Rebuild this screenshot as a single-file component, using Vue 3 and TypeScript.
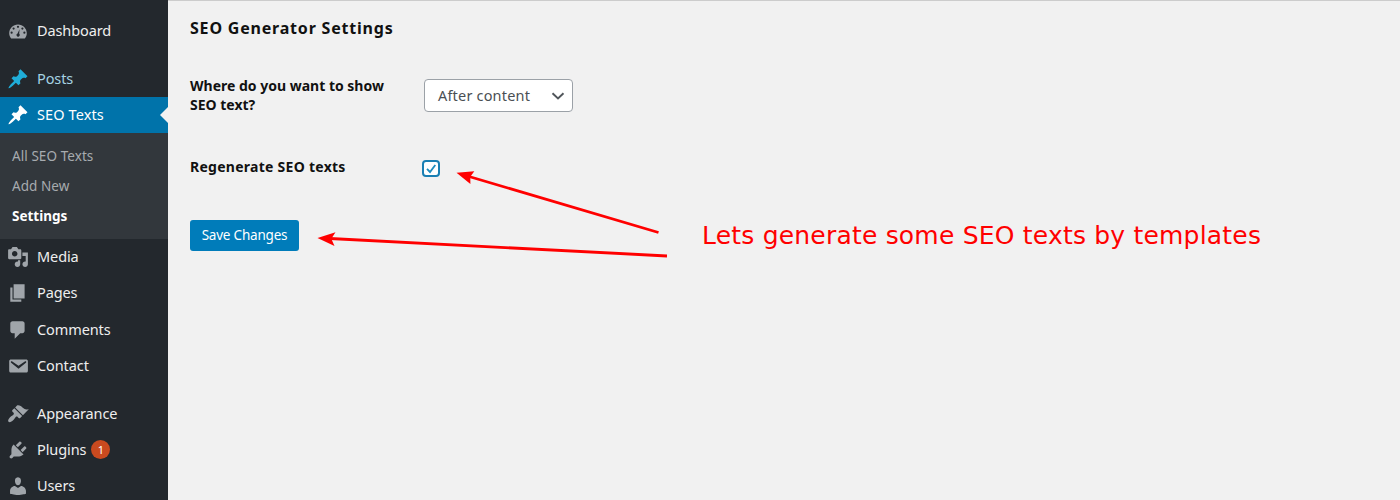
<script setup lang="ts">
interface MenuItem {
  label: string
  icon: string
  state?: 'hover' | 'current'
  gap?: boolean
  badge?: number
  children?: { label: string; active?: boolean }[]
}

const pin =
  'M10.44 3.02l1.82-1.82 6.36 6.35-1.83 1.82c-1.05-.68-2.48-.57-3.41.36l-.75.75c-.92.93-1.04 2.35-.35 3.41l-1.83 1.82-2.41-2.41-2.8 2.79c-.42.42-3.38 2.71-3.8 2.29s1.86-3.39 2.28-3.81l2.79-2.79L4.1 9.36l1.83-1.82c1.05.69 2.48.57 3.4-.36l.75-.75c.93-.92 1.05-2.35.36-3.41z'

const menu: MenuItem[] = [
  {
    label: 'Dashboard',
    icon: 'M3.76 16.8h12.48C17.34 15.43 18 13.89 18 12c0-4.42-3.58-8-8-8s-8 3.58-8 8c0 1.89.66 3.43 1.76 4.8zM10 5.2a1 1 0 1 1 0 2 1 1 0 0 1 0-2zM6 6.8a1 1 0 1 1 0 2 1 1 0 0 1 0-2zm8 0a1 1 0 1 1 0 2 1 1 0 0 1 0-2zm-2.6 1.6-.3 4.1a1.500 1.500 0 1 1-1.500-.3zM4.2 10.5a1 1 0 1 1 0 2 1 1 0 0 1 0-2zm11.6 0a1 1 0 1 1 0 2 1 1 0 0 1 0-2z',
  },
  { label: 'Posts', icon: pin, state: 'hover', gap: true },
  {
    label: 'SEO Texts',
    icon: pin,
    state: 'current',
    children: [{ label: 'All SEO Texts' }, { label: 'Add New' }, { label: 'Settings', active: true }],
  },
  {
    label: 'Media',
    icon: 'M13 11V4c0-.55-.45-1-1-1h-1.67L9 1H5L3.67 3H2c-.55 0-1 .45-1 1v7c0 .55.45 1 1 1h10c.55 0 1-.45 1-1zM7 4.5c1.38 0 2.5 1.12 2.5 2.5S8.38 9.5 7 9.5 4.5 8.38 4.5 7 5.62 4.5 7 4.5zM14 6h5v10.5c0 1.38-1.12 2.5-2.5 2.5S14 17.88 14 16.5s1.12-2.5 2.5-2.5c.17 0 .34.02.5.05V9h-3V6zm-4 8.05V13h2v3.5c0 1.38-1.12 2.5-2.5 2.5S7 17.88 7 16.5 8.12 14 9.5 14c.17 0 .34.02.5.05z',
  },
  { label: 'Pages', icon: 'M6 15V2h10v13H6zm-1 1h8v2H3V5h2v11z' },
  {
    label: 'Comments',
    icon: 'M5 2h9c1.1 0 2 .9 2 2v7c0 1.1-.9 2-2 2h-2l-5 5v-5H5c-1.1 0-2-.9-2-2V4c0-1.1.9-2 2-2z',
  },
  {
    label: 'Contact',
    icon: 'M3.87 4h13.25C18.37 4 19 4.59 19 5.79v8.42c0 1.19-.63 1.79-1.88 1.79H3.87c-1.25 0-1.88-.6-1.88-1.79V5.79c0-1.2.63-1.79 1.88-1.79zm6.62 8.6l6.74-5.53c.24-.2.43-.66.13-1.07-.29-.41-.82-.42-1.17-.17l-5.7 3.86L4.8 5.83c-.35-.25-.88-.24-1.17.17-.3.41-.11.87.13 1.07z',
  },
  {
    label: 'Appearance',
    gap: true,
    icon: 'M14.48 11.06L7.41 3.99l1.5-1.5c.5-.56 2.3-.47 3.51.32 1.21.8 1.43 1.28 2.91 2.1 1.18.64 2.45 1.26 4.45.85zm-.71.71L6.7 4.7 4.93 6.47c-.39.39-.39 1.02 0 1.41l1.06 1.06c.39.39.39 1.03 0 1.42-.6.6-1.43 1.11-2.21 1.69-.35.26-.7.53-1.01.84C1.43 14.23.4 16.08 1.4 17.07c.99 1 2.84-.03 4.18-1.36.31-.31.58-.66.85-1.02.57-.78 1.08-1.61 1.69-2.21.39-.39 1.02-.39 1.41 0l1.06 1.06c.39.39 1.02.39 1.41 0z',
  },
  {
    label: 'Plugins',
    badge: 1,
    icon: 'M13.11 4.36L9.87 7.6 8 5.73l3.24-3.24c.35-.34 1.05-.2 1.56.32.52.51.66 1.21.31 1.55zm-8 1.77l.91-1.12 9.01 9.01-1.19.84c-.71.71-2.63 1.16-3.82 1.16H6.14L4.9 17.26c-.59.59-1.54.59-2.12 0-.59-.58-.59-1.53 0-2.12l1.24-1.24v-3.88c0-1.13.4-3.19 1.09-3.89zm7.26 3.97l3.24-3.24c.34-.35 1.04-.21 1.55.31.52.51.66 1.21.31 1.55l-3.24 3.25z',
  },
  {
    label: 'Users',
    icon: 'M10 9.25c-2.27 0-2.73-3.44-2.73-3.44C7 4.02 7.82 2 9.97 2c2.16 0 2.98 2.02 2.71 3.81 0 0-.41 3.44-2.68 3.44zm0 2.57L12.72 10c2.39 0 4.52 2.33 4.52 4.53v2.49s-3.65 1.13-7.24 1.13c-3.65 0-7.24-1.13-7.24-1.13v-2.49c0-2.25 1.94-4.48 4.47-4.48z',
  },
]
</script>

<template>
  <div class="admin">
    <nav class="sidebar">
      <div v-for="item in menu" :key="item.label" class="entry" :class="{ gap: item.gap }">
        <a class="item" :class="item.state">
          <svg class="icon" viewBox="0 0 20 20"><path fill-rule="evenodd" :d="item.icon" /></svg>
          <span class="name">{{ item.label }}</span>
          <span v-if="item.badge" class="badge">{{ item.badge }}</span>
        </a>
        <div v-if="item.children" class="submenu">
          <a v-for="child in item.children" :key="child.label" :class="{ active: child.active }">{{ child.label }}</a>
        </div>
      </div>
    </nav>

    <main class="content">
      <h2>SEO Generator Settings</h2>
      <div class="field">
        <div class="label">Where do you want to show<br />SEO text?</div>
        <div class="select">
          <span>After content</span>
          <svg viewBox="0 0 14 8"><path d="M1.5 1.2 7 6.5 12.5 1.2" /></svg>
        </div>
      </div>
      <div class="field toggle">
        <div class="label">Regenerate SEO texts</div>
        <div class="checkbox">
          <svg viewBox="0 0 14 13"><path d="M3 6.9 6 10 11.300 3" /></svg>
        </div>
      </div>
      <button class="save">Save Changes</button>
    </main>

    <svg class="arrows" viewBox="0 0 1400 500">
      <path class="shaft" d="M658.5 232.5 469 176.5M667 256 330 238.5" />
      <path class="head" d="M456.5 172.7 474.3 171.2 470.3 176.7 470.4 184zM317.5 238 335.5 232.2 331.3 238.7 334.5 246z" />
    </svg>
    <div class="note">Lets generate some SEO texts by templates</div>
  </div>
</template>

<style>
body {
  margin: 0;
  background: #f1f1f1;
}
</style>

<style scoped>
.admin {
  position: relative;
  display: flex;
  width: 1400px;
  height: 500px;
  overflow: hidden;
  background: #f1f1f1;
  font-family: 'Noto Sans', 'Open Sans', sans-serif;
}
.sidebar {
  width: 168px;
  height: 500px;
  box-sizing: border-box;
  padding-top: 12.4px;
  flex: none;
  background: #23282d;
}
.gap {
  margin-top: 12px;
}
.gap ~ .gap {
  margin-top: 11.4px;
}
.item {
  position: relative;
  display: flex;
  align-items: center;
  height: 36.3px;
  padding-left: 7px;
  color: #eee;
  font-size: 14.5px;
  letter-spacing: -0.1px;
  line-height: 20px;
}
.name {
  margin-top: -1.6px;
}
.icon {
  width: 22px;
  height: 22px;
  margin-right: 8px;
  flex: none;
  fill: #a0a5aa;
}
.hover {
  color: #a5d3e3;
}
.hover .icon {
  fill: #1fadd8;
}
.current {
  background: #0073aa;
  color: #fff;
  letter-spacing: 0.1px;
}
.current .icon {
  fill: #fff;
}
.current::after {
  content: '';
  position: absolute;
  right: 0;
  top: 10px;
  border: 8px solid transparent;
  border-left: 0;
  border-right-color: #f1f1f1;
}
.badge {
  width: 19px;
  height: 19px;
  margin-left: 5px;
  border-radius: 50%;
  background: #ca4a1f;
  color: #fff;
  font-size: 11px;
  line-height: 19px;
  text-align: center;
}
.submenu {
  display: flex;
  flex-direction: column;
  height: 105.5px;
  box-sizing: border-box;
  padding: 7.5px 0 0 12px;
  background: #32373c;
}
.submenu a {
  height: 30.2px;
  color: #a7abaf;
  font-size: 13.5px;
  letter-spacing: 0.07px;
  line-height: 30px;
}
.submenu .active {
  color: #fff;
  font-weight: 700;
  letter-spacing: 0;
}
.content {
  flex: 1;
  box-sizing: border-box;
  padding-left: 22px;
  border-top: 1px solid #ccc;
}
h2 {
  margin: 17px 0 0;
  color: #111;
  font-size: 16px;
  font-weight: 700;
  letter-spacing: 0.8px;
  line-height: 20px;
}
.field {
  display: flex;
  height: 81px;
  margin-top: 38px;
  color: #111;
}
.label {
  width: 234px;
  font-size: 14px;
  font-weight: 700;
  line-height: 19px;
}
.select {
  display: flex;
  align-items: center;
  justify-content: space-between;
  width: 149px;
  height: 33px;
  margin-top: 3px;
  padding: 0 7px 0 13px;
  box-sizing: border-box;
  border: 1.5px solid #9ba1a7;
  border-radius: 4px;
  background: #fff;
  color: #4a4f54;
  font-size: 14.5px;
  letter-spacing: 0.18px;
}
.select span {
  margin-top: -2px;
}
.select svg {
  width: 14px;
  height: 8px;
}
.select path {
  fill: none;
  stroke: #50555a;
  stroke-width: 1.9;
}
.toggle {
  height: 63px;
  margin-top: 0;
}
.toggle .label {
  width: 232px;
  letter-spacing: 0.27px;
}
.checkbox {
  width: 18px;
  height: 17px;
  margin-top: 3px;
  box-sizing: border-box;
  border: 2px solid #1a7fb3;
  border-radius: 4px;
  background: #fff;
}
.checkbox svg {
  display: block;
  width: 14px;
  height: 13px;
}
.checkbox path {
  fill: none;
  stroke: #1e8cbe;
  stroke-width: 1.8;
}
.save {
  display: block;
  width: 109px;
  height: 31px;
  padding: 0 0 1px;
  border: 0;
  border-radius: 3px;
  background: #007cba;
  color: #fff;
  font: 13.5px/30px 'Noto Sans', 'Open Sans', sans-serif;
  letter-spacing: -0.2px;
}
.arrows {
  position: absolute;
  inset: 0;
  width: 1400px;
  height: 500px;
}
.shaft {
  fill: none;
  stroke: #f00;
  stroke-width: 2.8;
}
.head {
  fill: #f00;
}
.note {
  position: absolute;
  left: 702px;
  top: 221px;
  color: #f00;
  font: 25px/30px 'DejaVu Sans', sans-serif;
  letter-spacing: 0.2px;
  white-space: nowrap;
}
</style>
